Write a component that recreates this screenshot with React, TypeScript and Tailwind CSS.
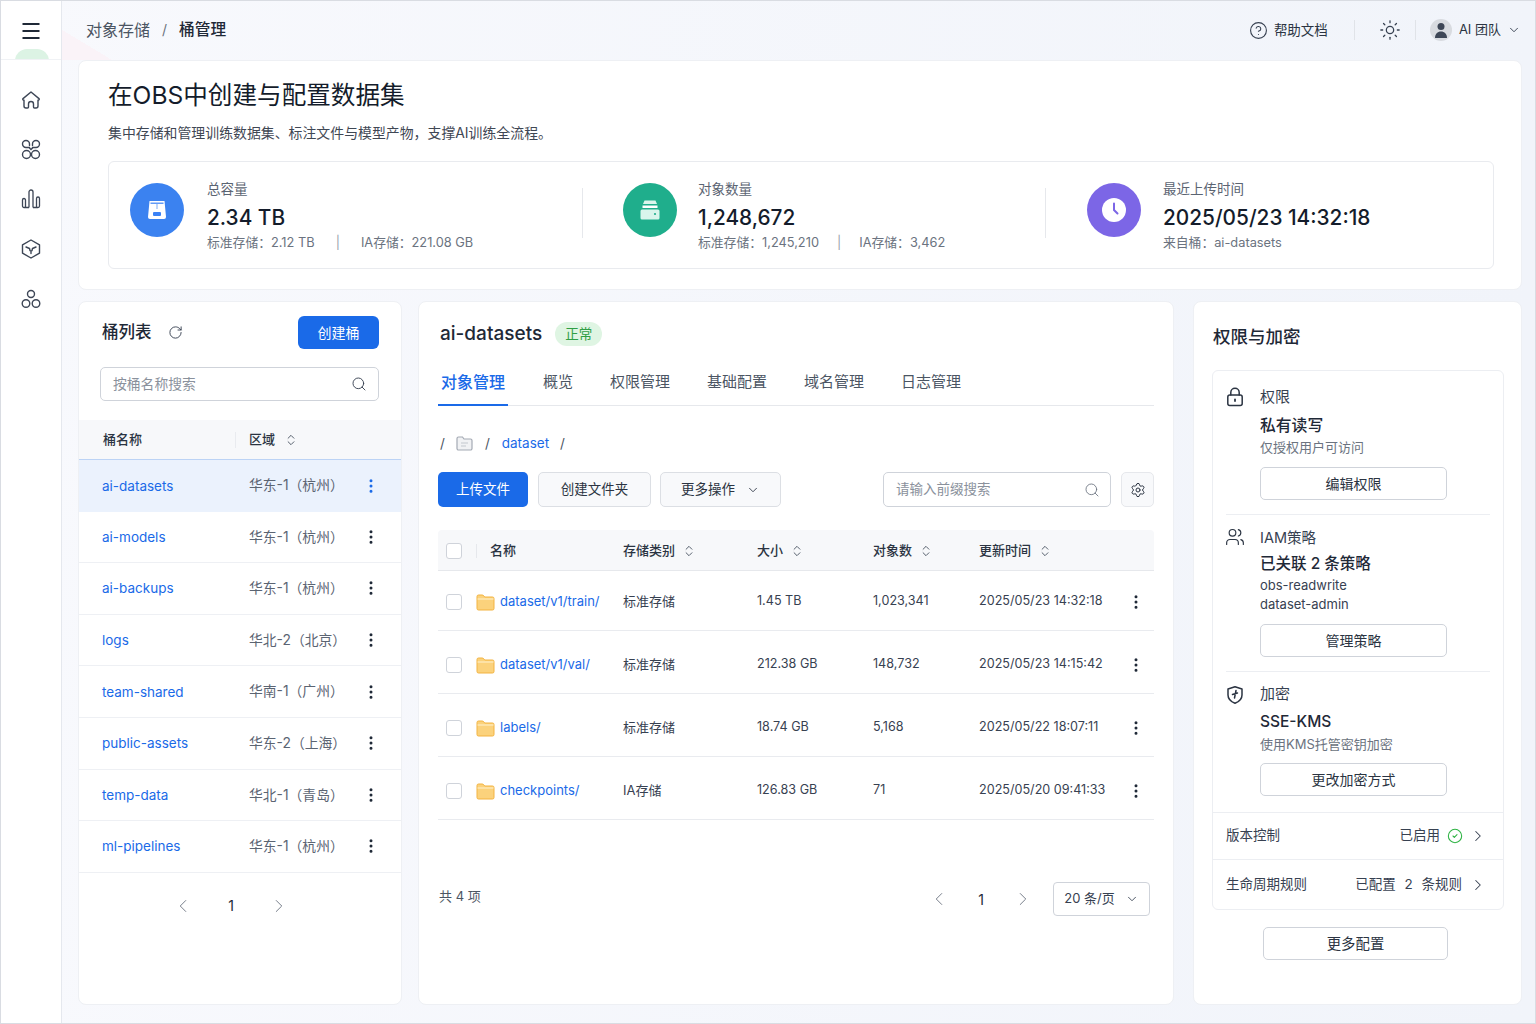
import {
  ChevronDown,
  ChevronLeft,
  ChevronRight,
  ChevronsUpDown,
  CircleCheck,
  CircleHelp,
  EllipsisVertical,
  RotateCw,
  Search,
  Settings,
  Sun,
  Users,
} from 'lucide-react'

const buckets = [
  ['ai-datasets', '华东-1（杭州）'],
  ['ai-models', '华东-1（杭州）'],
  ['ai-backups', '华东-1（杭州）'],
  ['logs', '华北-2（北京）'],
  ['team-shared', '华南-1（广州）'],
  ['public-assets', '华东-2（上海）'],
  ['temp-data', '华北-1（青岛）'],
  ['ml-pipelines', '华东-1（杭州）'],
]

const files = [
  ['dataset/v1/train/', '标准存储', '1.45 TB', '1,023,341', '2025/05/23 14:32:18'],
  ['dataset/v1/val/', '标准存储', '212.38 GB', '148,732', '2025/05/23 14:15:42'],
  ['labels/', '标准存储', '18.74 GB', '5,168', '2025/05/22 18:07:11'],
  ['checkpoints/', 'IA存储', '126.83 GB', '71', '2025/05/20 09:41:33'],
]

const tabs = ['概览', '权限管理', '基础配置', '域名管理', '日志管理']

function HomeIcon() {
  return (
    <svg width="22" height="22" viewBox="0 0 22 22" fill="none" stroke="#3d4656" strokeWidth="1.4" strokeLinejoin="round" strokeLinecap="round">
      <path d="M3 9.6 11 3l8 6.6c.5.5.3 1.2-.3 1.4l-.7.2V17a2 2 0 0 1-2 2h-1.500a1 1 0 0 1-1-1v-3a2.500 2.500 0 0 0-5 0v3a1 1 0 0 1-1 1H6a2 2 0 0 1-2-2v-5.800l-.7-.2c-.6-.2-.8-.9-.3-1.400Z" />
    </svg>
  )
}

function AppsIcon() {
  return (
    <svg width="22" height="22" viewBox="0 0 22 22" fill="none" stroke="#3d4656" strokeWidth="1.4" strokeLinecap="round">
      <circle cx="6.500" cy="15.500" r="4" />
      <circle cx="15.500" cy="15.500" r="4" />
      <path d="M9.500 8.500H6A3.500 3.500 0 1 1 9.500 5v1.500" />
      <path d="M12.500 8.500H16A3.500 3.500 0 1 0 12.500 5v1.500" />
      <path d="m9.500 9 1.500 1.500L12.500 9" />
    </svg>
  )
}

function ChartIcon() {
  return (
    <svg width="22" height="22" viewBox="0 0 22 22" fill="none" stroke="#3d4656" strokeWidth="1.3" strokeLinejoin="round">
      <path d="M9 19.500V4a2 2 0 0 1 4 0v15.500" />
      <path d="M9 19.500H4a1.500 1.500 0 0 1-1.500-1.500v-6a1.500 1.500 0 0 1 3 0v7.500" />
      <path d="M13 19.500h5a1.500 1.500 0 0 0 1.500-1.500v-7.500a1.500 1.500 0 0 0-3 0v9" />
    </svg>
  )
}

function BoxIcon() {
  return (
    <svg width="22" height="22" viewBox="0 0 22 22" fill="none" stroke="#3d4656" strokeWidth="1.4" strokeLinejoin="round" strokeLinecap="round">
      <path d="M11 2 19.500 6.800v8.400L11 20l-8.500-4.800V6.800L11 2Z" />
      <path d="m6 9 3.500 1.500.5 2M16 9l-3.500 1.500-.5 2M11 13v2.500" />
    </svg>
  )
}

function NodesIcon() {
  return (
    <svg width="22" height="22" viewBox="0 0 22 22" fill="none" stroke="#3d4656" strokeWidth="1.4">
      <circle cx="11" cy="6" r="3.500" />
      <circle cx="6" cy="15.500" r="3.800" />
      <circle cx="16" cy="15.500" r="3.800" />
    </svg>
  )
}

function MenuBars() {
  return (
    <svg width="20" height="18" viewBox="0 0 20 18" fill="none" stroke="#1f2937" strokeWidth="2">
      <path d="M1.500 2h17M1.500 9h17M1.500 16h17" />
    </svg>
  )
}

function DriveGlyph() {
  return (
    <svg width="24" height="24" viewBox="0 0 24 24">
      <path d="M4.500 3h15l1.500 16a2 2 0 0 1-2 2H5a2 2 0 0 1-2-2L4.500 3Z" fill="#fff" />
      <path d="M5.500 5.200h13" stroke="#3b82f6" strokeWidth="1.200" />
      <path d="M12 6v5" stroke="#93b9f5" strokeWidth="1.200" />
      <rect x="8" y="14" width="8" height="4" rx="1" fill="#3b82f6" />
    </svg>
  )
}

function DrawerGlyph() {
  return (
    <svg width="26" height="26" viewBox="0 0 26 26">
      <path d="M7.500 3.500h11l1.500 3.500H6l1.500-3.500Z" fill="#d9f5ec" />
      <path d="M5.500 8.500h15V11h-15z" fill="#fff" />
      <rect x="3.500" y="12.500" width="19" height="10" rx="1.500" fill="#d9f5ec" />
      <circle cx="18" cy="17" r="1.100" fill="#1fae8c" />
    </svg>
  )
}

function ClockGlyph() {
  return (
    <svg width="26" height="26" viewBox="0 0 26 26">
      <circle cx="13" cy="13" r="12" fill="#fff" />
      <path d="M13 6.500V13l3.500 3.500" fill="none" stroke="#7c66e6" strokeWidth="2" strokeLinecap="round" />
    </svg>
  )
}

function Folder() {
  return (
    <svg width="19" height="18" viewBox="0 0 19 18" className="shrink-0">
      <path d="M1 3.500A1.500 1.500 0 0 1 2.500 2h4.300l2 2h7.700A1.500 1.500 0 0 1 18 5.500v10a1.500 1.500 0 0 1-1.500 1.500h-14A1.500 1.500 0 0 1 1 15.500Z" fill="#fbd27c" stroke="#f3b340" />
      <path d="M1.500 6h16" stroke="#fff2cf" />
    </svg>
  )
}

function SmallFolder() {
  return (
    <svg width="17" height="15" viewBox="0 0 17 15">
      <path d="M1 2.500A1.500 1.500 0 0 1 2.500 1h4l1.500 2h6.500A1.500 1.500 0 0 1 16 4.500v8a1.500 1.500 0 0 1-1.500 1.500h-12A1.500 1.500 0 0 1 1 12.500Z" fill="#f1f2f4" stroke="#a4aab4" strokeWidth="1.200" />
      <path d="M5 7h7M5 10h5" stroke="#c3c7ce" strokeWidth="1.200" />
    </svg>
  )
}

function LockKey() {
  return (
    <svg width="18" height="20" viewBox="0 0 18 20" fill="none" stroke="#2b3442" strokeWidth="1.500" strokeLinecap="round">
      <rect x="1.800" y="8" width="14.400" height="10.500" rx="2" />
      <path d="M4.800 8V5.500a4.200 4.200 0 0 1 8.400 0V8" />
      <path d="M9 12.500v1.500" strokeWidth="1.800" />
    </svg>
  )
}

function ShieldKey() {
  return (
    <svg width="20" height="20" viewBox="0 0 20 20" fill="none" stroke="#2b3442" strokeWidth="1.500" strokeLinejoin="round" strokeLinecap="round">
      <path d="M10 1.800 17 4v6c0 4-3 6.700-7 8.300C6 16.700 3 14 3 10V4l7-2.200Z" />
      <path d="M11 5.500 9.500 13M7.500 9.500l5-1.500" />
    </svg>
  )
}

function Stat({ icon, color, label, value, sub, className, textClass, divider }: { icon: React.ReactNode; color: string; label: string; value: string; sub: React.ReactNode; className: string; textClass: string; divider?: boolean }) {
  return (
    <div className={`flex items-center relative ${className}`}>
      {divider && <div className="absolute left-0 top-[26px] h-[50px] w-px bg-[#e6e8ec]" />}
      <div className={`w-[54px] h-[54px] mb-[10px] rounded-full flex items-center justify-center shrink-0 ${color}`}>{icon}</div>
      <div className={`flex flex-col mt-[2px] ${textClass}`}>
        <div className="text-[13.500px] leading-[18px] text-[#5b6472]">{label}</div>
        <div className="text-[20.800px] leading-[28px] mt-[6px] font-medium text-[#141c2b]">{value}</div>
        <div className="text-[12.800px] leading-[18px] mt-[2px] text-[#6b7380] whitespace-nowrap">{sub}</div>
      </div>
    </div>
  )
}

function OutlineBtn({ children, className }: { children: React.ReactNode; className?: string }) {
  return (
    <button className={`h-[33px] rounded-[5px] border border-[#cfd3da] bg-white text-[14px] text-[#2b3442] flex items-center justify-center ${className ?? ''}`}>
      {children}
    </button>
  )
}

function SortHead({ label }: { label: string }) {
  return (
    <div className="flex items-center gap-[7px]">
      <span>{label}</span>
      <ChevronsUpDown size={14} strokeWidth={1.600} className="text-[#4b5563]" />
    </div>
  )
}

export default function App() {
  return (
    <div className="relative flex w-[1536px] h-[1024px] overflow-hidden bg-linear-to-r from-[#f8f9fd] to-[#f1f4fa] border border-[#d9dce2] font-['Inter','Noto_Sans_CJK_SC',sans-serif] text-[#1f2937]">
      <aside className="w-[61px] shrink-0 bg-white border-r border-[#e5e8ee] flex flex-col items-center">
        <div className="relative w-full h-[59px] flex items-start justify-center pt-[21px] overflow-hidden border-b border-[#f0f2f5]">
          <MenuBars />
          <div className="absolute left-[14px] top-[48px] w-[34px] h-[24px] rounded-full bg-[#dcf3e4]" />
        </div>
        <div className="flex flex-col items-center gap-[27.700px] mt-[29px]">
          <HomeIcon />
          <AppsIcon />
          <ChartIcon />
          <BoxIcon />
          <NodesIcon />
        </div>
      </aside>

      <div className="flex-1 flex flex-col min-w-0">
        <header className="relative h-[59px] shrink-0 flex items-center pl-[24px] pr-[14px]">
          <div className="absolute left-[0px] top-[29px] w-[50px] h-[30px] bg-[linear-gradient(to_top_right,#faf3f8_50%,transparent_50%)]" />
          <div className="relative flex items-center text-[16px] -mt-[2px]">
            <span className="text-[#4b5563]">对象存储</span>
            <span className="text-[#6b7380] mx-[12px] text-[14px]">/</span>
            <span className="font-medium text-[15.700px] text-[#1f2937]">桶管理</span>
          </div>
          <div className="ml-auto flex items-center text-[13.500px] -mt-[1px]">
            <CircleHelp size={19} strokeWidth={1.400} className="text-[#374151]" />
            <span className="ml-[6px] text-[#2b3442]">帮助文档</span>
            <div className="w-px h-[20px] bg-[#e0e3e8] ml-[26px]" />
            <Sun size={22} strokeWidth={1.400} className="text-[#374151] ml-[24px]" />
            <div className="w-px h-[20px] bg-[#e0e3e8] ml-[14px]" />
            <div className="ml-[14px] w-[22px] h-[22px] rounded-full bg-[#d8dbe0] flex items-center justify-center overflow-hidden">
              <svg width="14" height="16" viewBox="0 0 14 16" fill="#3d4656">
                <circle cx="7" cy="4.500" r="3.500" />
                <path d="M1 16c0-4 2.500-6.500 6-6.500s6 2.500 6 6.500Z" />
              </svg>
            </div>
            <span className="ml-[7px] text-[13px] text-[#2b3442]">AI 团队</span>
            <ChevronDown size={14} strokeWidth={1.600} className="ml-[6px] text-[#374151]" />
          </div>
        </header>

        <main className="flex-1 flex flex-col pl-[16px] pr-[13px] pb-[18px] gap-[11px] min-h-0">
          <section className="relative h-[230px] shrink-0 bg-white rounded-[8px] border border-[#eef0f4] pl-[29px] pr-[27px] pt-[17px]">
            <h1 className="text-[24.600px] leading-[34px] text-[#141c2b] font-normal">在OBS中创建与配置数据集</h1>
            <p className="text-[13.900px] leading-[18px] mt-[12px] text-[#3f4754]">集中存储和管理训练数据集、标注文件与模型产物，支撑AI训练全流程。</p>
            <div className="mt-[19px] h-[108px] rounded-[6px] border border-[#e9ebef] grid grid-cols-[473px_463px_1fr]">
              <Stat
                className="pl-[21px]"
                textClass="ml-[23px]"
                icon={<DriveGlyph />}
                color="bg-[#3b82f0]"
                label="总容量"
                value="2.34 TB"
                sub={<><span>标准存储：2.12 TB</span><span className="mx-[21px] text-[#9aa1ac]">|</span><span>IA存储：221.08 GB</span></>}
              />
              <Stat
                divider
                className="pl-[41px]"
                textClass="ml-[21px]"
                icon={<DrawerGlyph />}
                color="bg-[#1fae8c]"
                label="对象数量"
                value="1,248,672"
                sub={<><span>标准存储：1,245,210</span><span className="mx-[18px] text-[#9aa1ac]">|</span><span>IA存储：3,462</span></>}
              />
              <Stat
                divider
                className="pl-[42px]"
                textClass="ml-[22px]"
                icon={<ClockGlyph />}
                color="bg-[#7c66e6]"
                label="最近上传时间"
                value="2025/05/23 14:32:18"
                sub="来自桶：ai-datasets"
              />
            </div>
          </section>

          <div className="flex-1 flex gap-[16px] min-h-0">
            <section className="w-[324px] shrink-0 bg-white rounded-[8px] border border-[#eef0f4] flex flex-col">
              <div className="flex items-center h-[33px] mt-[14px] pl-[23px] pr-[22px] relative">
                <h2 className="text-[16.500px] font-medium text-[#1f2937]">桶列表</h2>
                <RotateCw size={15} strokeWidth={1.500} className="ml-[16px] text-[#374151]" />
                <button className="ml-auto w-[81px] h-[33px] rounded-[6px] bg-[#1a6ae8] text-white text-[14px]">创建桶</button>
              </div>
              <div className="ml-[21px] mr-[22px] mt-[18px] h-[34px] rounded-[5px] border border-[#cfd3da] flex items-center pl-[12px] pr-[11px]">
                <span className="text-[13.800px] text-[#8a919c]">按桶名称搜索</span>
                <Search size={16} strokeWidth={1.400} className="ml-auto text-[#374151]" />
              </div>
              <div className="mt-[19px] h-[40px] bg-[#f7f8fa] border-b border-[#bcd3f5] flex items-center text-[13px] text-[#2b3442] font-medium shrink-0">
                <div className="pl-[24px] w-[157px] border-r border-[#e9ebef] h-[16px] flex items-center">桶名称</div>
                <div className="pl-[13px]">
                  <div className="flex items-center gap-[9px]">
                    <span>区域</span>
                    <ChevronsUpDown size={14} strokeWidth={1.600} className="text-[#4b5563]" />
                  </div>
                </div>
              </div>
              <div className="flex flex-col">
                {buckets.map(([name, region], i) => (
                  <div key={name} className={`h-[51.600px] flex items-center border-b border-[#eef0f4] ${i === 0 ? 'bg-[#ebf2fd] border-b-0' : ''}`}>
                    <span className="pl-[23px] w-[170px] text-[13.500px] text-[#1a6ae8]">{name}</span>
                    <span className="w-[100px] text-[13.800px] text-[#5b6472] whitespace-nowrap">{region}</span>
                    <EllipsisVertical size={18} strokeWidth={2} className={`ml-[13px] ${i === 0 ? 'text-[#1a6ae8]' : 'text-[#1f2937]'}`} />
                  </div>
                ))}
              </div>
              <div className="flex items-center justify-center gap-[27px] mt-[22px] text-[14px] pr-[18px]">
                <ChevronLeft size={22} strokeWidth={1} className="text-[#6b7380]" />
                <span className="w-[20px] text-center">1</span>
                <ChevronRight size={22} strokeWidth={1} className="text-[#6b7380]" />
              </div>
            </section>

            <section className="w-[756px] shrink-0 bg-white rounded-[8px] border border-[#eef0f4] pl-[19px] pr-[19px] flex flex-col">
              <div className="flex items-center mt-[17px] h-[30px] pl-[2px]">
                <h2 className="text-[19px] font-medium text-[#1f2937]">ai-datasets</h2>
                <span className="ml-[13px] w-[47px] h-[24px] rounded-full bg-[#dff5e3] text-[#2f9e44] text-[13.500px] flex items-center justify-center">正常</span>
              </div>
              <div className="flex items-end border-b border-[#e6e8ec] h-[42px] mt-[15px] text-[15px] text-[#4b5563] shrink-0">
                <div className="w-[70px] h-[42px] border-b-[2px] -mb-px border-[#1a6ae8] text-[16px] font-medium text-[#1a6ae8] flex items-start justify-center pt-[6px]">对象管理</div>
                {tabs.map((t, i) => (
                  <div key={t} className={`h-[42px] pt-[8px] ${i === 0 ? 'ml-[35px]' : 'ml-[37px]'}`}>{t}</div>
                ))}
              </div>
              <div className="flex items-center mt-[27px] h-[20px] text-[13.500px] pl-[2px] text-[#4b5563]">
                <span>/</span>
                <span className="ml-[11px]"><SmallFolder /></span>
                <span className="ml-[12px]">/</span>
                <span className="ml-[12px] text-[#1a6ae8]">dataset</span>
                <span className="ml-[11px]">/</span>
              </div>
              <div className="flex items-center mt-[19px] h-[35px] text-[13.500px]">
                <button className="w-[90px] h-[35px] rounded-[5px] bg-[#1a6ae8] text-white">上传文件</button>
                <button className="ml-[10px] w-[113px] h-[35px] rounded-[5px] border border-[#dcdfe4] bg-[#f8f9fb] text-[#2b3442]">创建文件夹</button>
                <button className="ml-[9px] w-[121px] h-[35px] rounded-[5px] border border-[#dcdfe4] bg-[#f8f9fb] text-[#2b3442] flex items-center justify-center">
                  更多操作
                  <ChevronDown size={14} strokeWidth={1.500} className="ml-[11px]" />
                </button>
                <div className="ml-auto w-[228px] h-[35px] rounded-[5px] border border-[#cfd3da] flex items-center pl-[12px] pr-[10px]">
                  <span className="text-[#8a919c] text-[13.500px]">请输入前缀搜索</span>
                  <Search size={16} strokeWidth={1.300} className="ml-auto text-[#6b7380]" />
                </div>
                <button className="ml-[10px] w-[33px] h-[35px] rounded-[5px] border border-[#e6e8ec] bg-[#f8f9fb] flex items-center justify-center">
                  <Settings size={16} strokeWidth={1.500} className="text-[#2b3442]" />
                </button>
              </div>
              <div className="mt-[23px] h-[41px] pt-[2px] rounded-t-[4px] bg-[#f7f8fa] border-b border-[#e6e8ec] grid grid-cols-[185px_134px_116px_106px_137px_1fr] items-center text-[13px] text-[#2b3442] font-medium shrink-0">
                <div className="flex items-center pl-[8px]">
                  <span className="w-[16px] h-[16px] rounded-[3px] border border-[#cfd3da] bg-white" />
                  <span className="ml-[14px] w-px h-[14px] bg-[#e6e8ec]" />
                  <span className="ml-[13px]">名称</span>
                </div>
                <SortHead label="存储类别" />
                <SortHead label="大小" />
                <SortHead label="对象数" />
                <SortHead label="更新时间" />
                <div />
              </div>
              <div className="flex flex-col">
                {files.map(([name, type, size, count, time], i) => (
                  <div key={name} className={`${i === 0 ? 'h-[60px] pt-[2px]' : 'h-[63px] pt-[5px]'} border-b border-[#e9ebef] grid grid-cols-[185px_134px_116px_106px_137px_1fr] items-center text-[12.600px] text-[#374151]`}>
                    <div className="flex items-center pl-[8px]">
                      <span className="w-[16px] h-[16px] rounded-[3px] border border-[#cfd3da] bg-white shrink-0" />
                      <span className="ml-[14px]"><Folder /></span>
                      <span className="ml-[5px] text-[13px] text-[#1a6ae8] whitespace-nowrap">{name}</span>
                    </div>
                    <span className="text-[13px]">{type}</span>
                    <span>{size}</span>
                    <span>{count}</span>
                    <span className="whitespace-nowrap">{time}</span>
                    <EllipsisVertical size={18} strokeWidth={2} className="justify-self-center translate-x-px text-[#1f2937]" />
                  </div>
                ))}
              </div>
              <div className="flex items-center mt-[62px] text-[13px]">
                <span className="text-[#4b5563] -mt-[4px] ml-[1px]">共 4 项</span>
                <ChevronLeft size={22} strokeWidth={1} className="ml-auto text-[#6b7380]" />
                <span className="mx-[28px] text-[14px]">1</span>
                <ChevronRight size={22} strokeWidth={1} className="text-[#6b7380]" />
                <div className="ml-[19px] mr-[4px] w-[97px] h-[34px] rounded-[4px] border border-[#cfd3da] flex items-center justify-center text-[#374151]">
                  20 条/页
                  <ChevronDown size={14} strokeWidth={1.500} className="ml-[10px]" />
                </div>
              </div>
            </section>

            <section className="flex-1 ml-[3px] bg-white rounded-[8px] border border-[#eef0f4] flex flex-col">
              <h2 className="text-[17.500px] font-medium text-[#1f2937] mt-[23px] ml-[19px] leading-[24px]">权限与加密</h2>
              <div className="mt-[21px] ml-[18px] mr-[17px] rounded-[6px] border border-[#eceef2] flex flex-col">
                <div className="relative pl-[47px] pt-[17px] h-[143px]">
                  <span className="absolute left-[13px] top-[16px]"><LockKey /></span>
                  <div className="text-[15px] leading-[18px] text-[#374151]">权限</div>
                  <div className="text-[15.800px] leading-[22px] mt-[9px] font-medium text-[#1f2937]">私有读写</div>
                  <div className="text-[13px] leading-[18px] mt-[1px] text-[#6b7380]">仅授权用户可访问</div>
                  <OutlineBtn className="w-[187px] mt-[11px]">编辑权限</OutlineBtn>
                </div>
                <div className="mx-[13px] h-px bg-[#eceef2]" />
                <div className="relative pl-[47px] pt-[14px] h-[156px]">
                  <Users size={20} strokeWidth={1.400} className="absolute left-[12px] top-[12px] text-[#2b3442]" />
                  <div className="text-[14.500px] leading-[18px] text-[#374151]">IAM策略</div>
                  <div className="text-[15.500px] leading-[22px] mt-[6px] font-medium text-[#1f2937]">已关联 2 条策略</div>
                  <div className="text-[13px] leading-[19px] mt-[1px] text-[#374151]">obs-readwrite</div>
                  <div className="text-[13px] leading-[19px] text-[#374151]">dataset-admin</div>
                  <OutlineBtn className="w-[187px] mt-[10px]">管理策略</OutlineBtn>
                </div>
                <div className="mx-[13px] h-px bg-[#eceef2]" />
                <div className="relative pl-[47px] pt-[13px] h-[141px] border-b border-[#eceef2]">
                  <span className="absolute left-[12px] top-[13px]"><ShieldKey /></span>
                  <div className="text-[15px] leading-[18px] text-[#374151]">加密</div>
                  <div className="text-[15.500px] leading-[22px] mt-[8px] font-medium text-[#1f2937]">SSE-KMS</div>
                  <div className="text-[13px] leading-[18px] mt-[2px] text-[#6b7380]">使用KMS托管密钥加密</div>
                  <OutlineBtn className="w-[187px] mt-[10px]">更改加密方式</OutlineBtn>
                </div>
                <div className="h-[47px] flex items-center pb-[1px] pl-[13px] pr-[16px] text-[13.500px] text-[#374151] border-b border-[#eceef2]">
                  <span>版本控制</span>
                  <span className="ml-auto">已启用</span>
                  <CircleCheck size={16} strokeWidth={1.600} className="ml-[7px] text-[#2fb344]" />
                  <ChevronRight size={18} strokeWidth={1.400} className="ml-[6px]" />
                </div>
                <div className="h-[49px] flex items-center pl-[13px] pr-[16px] text-[13.500px] text-[#374151]">
                  <span>生命周期规则</span>
                  <span className="ml-auto [word-spacing:5px]">已配置 2 条规则</span>
                  <ChevronRight size={18} strokeWidth={1.400} className="ml-[7px]" />
                </div>
              </div>
              <OutlineBtn className="w-[185px] mt-[17px] ml-[69px] !text-[14.400px]">更多配置</OutlineBtn>
            </section>
          </div>
        </main>
      </div>
    </div>
  )
}
